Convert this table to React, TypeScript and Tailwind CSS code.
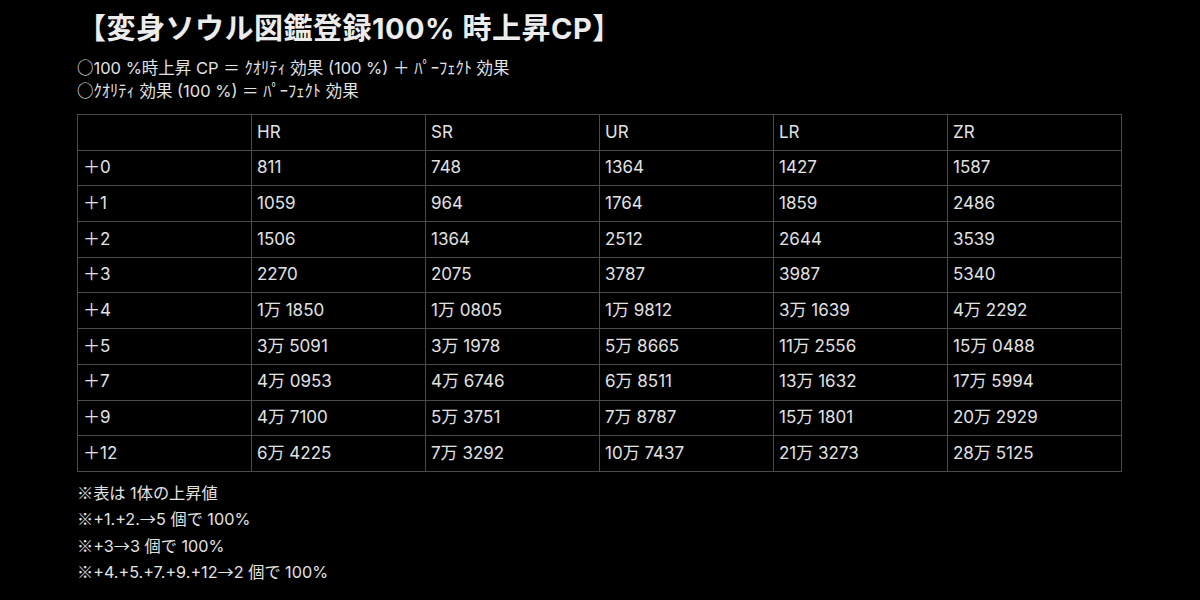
import React from 'react';

const cols = ['HR', 'SR', 'UR', 'LR', 'ZR'];

const rows: [string, string[]][] = [
  ['＋0', ['811', '748', '1364', '1427', '1587']],
  ['＋1', ['1059', '964', '1764', '1859', '2486']],
  ['＋2', ['1506', '1364', '2512', '2644', '3539']],
  ['＋3', ['2270', '2075', '3787', '3987', '5340']],
  ['＋4', ['1万 1850', '1万 0805', '1万 9812', '3万 1639', '4万 2292']],
  ['＋5', ['3万 5091', '3万 1978', '5万 8665', '11万 2556', '15万 0488']],
  ['＋7', ['4万 0953', '4万 6746', '6万 8511', '13万 1632', '17万 5994']],
  ['＋9', ['4万 7100', '5万 3751', '7万 8787', '15万 1801', '20万 2929']],
  ['＋12', ['6万 4225', '7万 3292', '10万 7437', '21万 3273', '28万 5125']],
];

// CJK-shaped symbols (※ ○ → ＝ ＋) come from the CJK font, not Inter
const J = ({ children }: { children: React.ReactNode }) => (
  <span style={{ fontFamily: '"Noto Sans CJK JP", sans-serif' }}>{children}</span>
);

export default function App() {
  return (
    <div
      className="w-[1200px] h-[600px] overflow-hidden bg-black text-[#e2e2e2] pl-[77px]"
      style={{ fontFamily: 'Inter, "Noto Sans CJK JP", sans-serif' }}
    >
      {/* Title */}
      <h1 className="pt-[11px] text-[29px] leading-[35px] tracking-[0.5px] font-bold text-[#ececec]">
        【変身ソウル図鑑登録100% 時上昇CP】
      </h1>

      {/* Formula lines */}
      <div className="mt-[10px] text-[16.5px] leading-[23px]">
        <p className="h-[23px]">
          <J>○</J>100 %時上昇 CP <J>＝</J> ｸｵﾘﾃｨ 効果 (100 %) <J>＋</J> ﾊﾟｰﾌｪｸﾄ 効果
        </p>
        <p className="h-[23px]">
          <J>○</J>ｸｵﾘﾃｨ 効果 (100 %) <J>＝</J> ﾊﾟｰﾌｪｸﾄ 効果
        </p>
      </div>

      {/* Table */}
      <table className="mt-[12px] w-[1045px] border-collapse table-fixed text-[17px]">
        <tbody>
          <tr className="h-[35.7px]">
            <td className="border border-[#4a4a4a] px-[5px]"></td>
            {cols.map((c) => (
              <td key={c} className="border border-[#4a4a4a] px-[5px]">{c}</td>
            ))}
          </tr>
          {rows.map(([label, vals]) => (
            <tr key={label} className="h-[35.7px]">
              <td className="border border-[#4a4a4a] px-[5px]">{label}</td>
              {vals.map((v, i) => (
                <td key={i} className="border border-[#4a4a4a] px-[5px]">{v}</td>
              ))}
            </tr>
          ))}
        </tbody>
      </table>

      {/* Notes */}
      <div className="mt-[7px] text-[16.2px] leading-[26.4px]">
        <p className="h-[26.4px]"><J>※</J>表は 1体の上昇値</p>
        <p className="h-[26.4px]"><J>※</J>+1.+2.<J>→</J>5 個で 100%</p>
        <p className="h-[26.4px]"><J>※</J>+3<J>→</J>3 個で 100%</p>
        <p className="h-[26.4px]"><J>※</J>+4.+5.+7.+9.+12<J>→</J>2 個で 100%</p>
      </div>
    </div>
  );
}
